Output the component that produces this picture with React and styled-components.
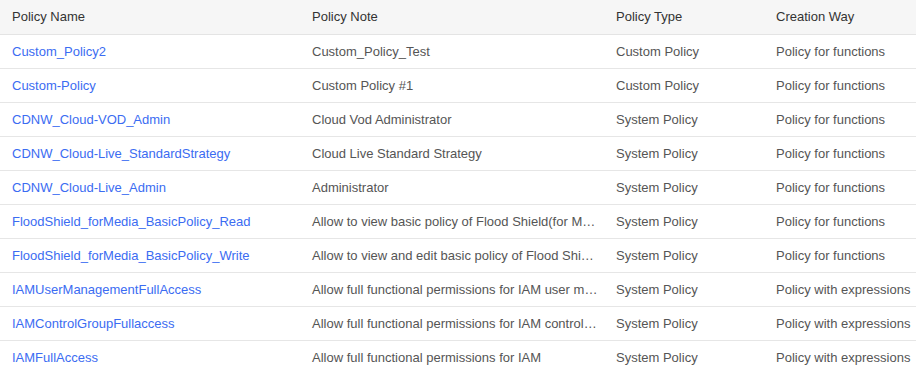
import React from 'react';
import styled, { createGlobalStyle } from 'styled-components';

const GlobalStyle = createGlobalStyle`
  body {
    margin: 0;
    background: #fff;
    font-family: "Liberation Sans", Arial, sans-serif;
  }
`;

const Table = styled.table`
  width: 916px;
  border-collapse: collapse;
  table-layout: fixed;
  font-size: 13px;
  color: #555;
`;

const HeadRow = styled.tr`
  background: #f6f6f6;
  border-bottom: 1px solid #e4e4e4;
`;

const Th = styled.th`
  width: ${(p) => p.w}px;
  height: 34px;
  padding: 0 4px 0 12px;
  text-align: left;
  font-weight: normal;
  color: #333;
  box-sizing: border-box;
`;

const Row = styled.tr`
  border-bottom: 1px solid #e6e6e6;
  &:last-child { border-bottom: none; }
`;

const Td = styled.td`
  height: 33px;
  padding: 0 4px 0 12px;
  white-space: nowrap;
  overflow: hidden;
  text-overflow: ellipsis;
`;

const Link = styled.a`
  color: #3b6cf2;
  text-decoration: none;
  cursor: pointer;
`;

const columns = [
  { title: 'Policy Name', w: 300 },
  { title: 'Policy Note', w: 304 },
  { title: 'Policy Type', w: 160 },
  { title: 'Creation Way', w: 152 },
];

const policies = [
  ['Custom_Policy2', 'Custom_Policy_Test', 'Custom Policy', 'Policy for functions'],
  ['Custom-Policy', 'Custom Policy #1', 'Custom Policy', 'Policy for functions'],
  ['CDNW_Cloud-VOD_Admin', 'Cloud Vod Administrator', 'System Policy', 'Policy for functions'],
  ['CDNW_Cloud-Live_StandardStrategy', 'Cloud Live Standard Strategy', 'System Policy', 'Policy for functions'],
  ['CDNW_Cloud-Live_Admin', 'Administrator', 'System Policy', 'Policy for functions'],
  ['FloodShield_forMedia_BasicPolicy_Read', 'Allow to view basic policy of Flood Shield(for Media)', 'System Policy', 'Policy for functions'],
  ['FloodShield_forMedia_BasicPolicy_Write', 'Allow to view and edit basic policy of Flood Shield(for Media)', 'System Policy', 'Policy for functions'],
  ['IAMUserManagementFullAccess', 'Allow full functional permissions for IAM user management', 'System Policy', 'Policy with expressions'],
  ['IAMControlGroupFullaccess', 'Allow full functional permissions for IAM control group', 'System Policy', 'Policy with expressions'],
  ['IAMFullAccess', 'Allow full functional permissions for IAM', 'System Policy', 'Policy with expressions'],
];

export default function App() {
  return (
    <>
      <GlobalStyle />
      <Table>
        <thead>
          <HeadRow>
            {columns.map((c) => (
              <Th key={c.title} w={c.w}>{c.title}</Th>
            ))}
          </HeadRow>
        </thead>
        <tbody>
          {policies.map(([name, note, type, way]) => (
            <Row key={name}>
              <Td><Link>{name}</Link></Td>
              <Td>{note}</Td>
              <Td>{type}</Td>
              <Td>{way}</Td>
            </Row>
          ))}
        </tbody>
      </Table>
    </>
  );
}
